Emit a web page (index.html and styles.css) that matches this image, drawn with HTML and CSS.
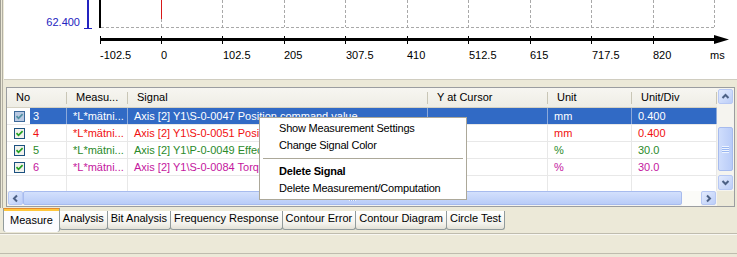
FILE: index.html
```html
<!DOCTYPE html>
<html lang="en">
<head>
    <meta charset="UTF-8">
    <title>Measure</title>
    <link rel="stylesheet" href="styles.css">
</head>
<body>
    <div class="workspace">
        <div class="pane">
            <!-- chart -->
            <div class="chart">
                <svg width="733" height="79" viewBox="4 0 733 79">
                    <g stroke="#a9a9a9" stroke-dasharray="3 2" fill="none">
                        <path d="M101 27.5H715"/>
                        <path d="M161.5 19V27M222.5 0V27M284.5 0V27M345.5 0V27M407.5 0V27M468.5 0V27M530.5 0V27M591.5 0V27M653.5 0V27M714.5 0V27"/>
                    </g>
                    <path d="M161.5 0V19" stroke="#d81818"/>
                    <text x="80" y="26" text-anchor="end" class="ylabel">62.400</text>
                    <path d="M88 0V28" stroke="#2323c0" stroke-width="2"/>
                    <path d="M84 28.5H92" stroke="#2323c0"/>
                    <path d="M100 0V28" stroke="#000" stroke-width="2"/>
                    <path d="M100 39.5H722" stroke="#000" stroke-width="3"/>
                    <polygon points="714,35 729,39.5 714,44" fill="#000"/>
                    <path d="M100.5 36V44M161.5 36V44M222.5 36V44M284.5 36V44M345.5 36V44M407.5 36V44M468.5 36V44M530.5 36V44M591.5 36V44M653.5 36V44" stroke="#000"/>
                    <g class="xlabel">
                        <text x="100" y="59">-102.5</text>
                        <text x="161" y="59">0</text>
                        <text x="223" y="59">102.5</text>
                        <text x="284" y="59">205</text>
                        <text x="346" y="59">307.5</text>
                        <text x="407" y="59">410</text>
                        <text x="469" y="59">512.5</text>
                        <text x="530" y="59">615</text>
                        <text x="592" y="59">717.5</text>
                        <text x="653" y="59">820</text>
                        <text x="710" y="59">ms</text>
                    </g>
                </svg>
            </div>

            <!-- signal list -->
            <div class="list">
                <div class="list-body">
                    <div class="grid">
                        <div class="head">
                            <div>No</div>
                            <div>Measu...</div>
                            <div>Signal</div>
                            <div>Y at Cursor</div>
                            <div>Unit</div>
                            <div>Unit/Div</div>
                        </div>
                        <div class="row sel">
                            <div class="no"><svg class="chk" viewBox="0 0 11 11"><rect x="0.5" y="0.5" width="10" height="10" fill="#b9c9e2" stroke="#3d6a9a"/><path d="M2.5 5.2L4.5 7.3L8.6 3.2" fill="none" stroke="#4f8fa0" stroke-width="1.7"/></svg><span>3</span></div>
                            <div>*L*mätni...</div>
                            <div>Axis [2] Y1\S-0-0047 Position command value</div>
                            <div></div>
                            <div>mm</div>
                            <div>0.400</div>
                        </div>
                        <div class="row red">
                            <div class="no"><svg class="chk" viewBox="0 0 11 11"><rect x="0.5" y="0.5" width="10" height="10" fill="#f1f1ec" stroke="#1c5180"/><path d="M2.5 5.2L4.5 7.3L8.6 3.2" fill="none" stroke="#21a121" stroke-width="1.7"/></svg><span>4</span></div>
                            <div>*L*mätni...</div>
                            <div>Axis [2] Y1\S-0-0051 Position feedback value</div>
                            <div></div>
                            <div>mm</div>
                            <div>0.400</div>
                        </div>
                        <div class="row green">
                            <div class="no"><svg class="chk" viewBox="0 0 11 11"><rect x="0.5" y="0.5" width="10" height="10" fill="#f1f1ec" stroke="#1c5180"/><path d="M2.5 5.2L4.5 7.3L8.6 3.2" fill="none" stroke="#21a121" stroke-width="1.7"/></svg><span>5</span></div>
                            <div>*L*mätni...</div>
                            <div>Axis [2] Y1\P-0-0049 Effective torque</div>
                            <div></div>
                            <div>%</div>
                            <div>30.0</div>
                        </div>
                        <div class="row magenta">
                            <div class="no"><svg class="chk" viewBox="0 0 11 11"><rect x="0.5" y="0.5" width="10" height="10" fill="#f1f1ec" stroke="#1c5180"/><path d="M2.5 5.2L4.5 7.3L8.6 3.2" fill="none" stroke="#21a121" stroke-width="1.7"/></svg><span>6</span></div>
                            <div>*L*mätni...</div>
                            <div>Axis [2] Y1\S-0-0084 Torque feedback value</div>
                            <div></div>
                            <div>%</div>
                            <div>30.0</div>
                        </div>
                        <div class="row">
                            <div></div><div></div><div></div><div></div><div></div><div></div>
                        </div>
                    </div>
                    <div class="vscroll">
                        <div class="sbtn"><svg viewBox="0 0 13 13"><path d="M3.5 8L6.5 5L9.5 8" fill="none" stroke="#4d6185" stroke-width="2"/></svg></div>
                        <div class="vthumb"><span class="grip-h"></span></div>
                        <div class="sbtn down"><svg viewBox="0 0 13 13"><path d="M3.5 5L6.5 8L9.5 5" fill="none" stroke="#4d6185" stroke-width="2"/></svg></div>
                    </div>
                </div>
                <div class="hscroll-row">
                    <div class="hscroll">
                        <div class="sbtn"><svg viewBox="0 0 13 13"><path d="M8 3.5L5 6.5L8 9.5" fill="none" stroke="#4d6185" stroke-width="2"/></svg></div>
                        <div class="hthumb"><span class="grip-v"></span></div>
                        <div class="track"></div>
                        <div class="sbtn"><svg viewBox="0 0 13 13"><path d="M5 3.5L8 6.5L5 9.5" fill="none" stroke="#4d6185" stroke-width="2"/></svg></div>
                    </div>
                    <div class="corner"></div>
                </div>
            </div>
        </div>
    </div>

    <!-- tabs -->
    <div class="tabs">
        <div class="tab active">Measure</div>
        <div class="tab">Analysis</div>
        <div class="tab">Bit Analysis</div>
        <div class="tab">Frequency Response</div>
        <div class="tab">Contour Error</div>
        <div class="tab">Contour Diagram</div>
        <div class="tab">Circle Test</div>
    </div>

    <div class="status"></div>

    <!-- context menu -->
    <div class="menu">
        <div class="menu-item">Show Measurement Settings</div>
        <div class="menu-item">Change Signal Color</div>
        <div class="menu-sep"></div>
        <div class="menu-item bold">Delete Signal</div>
        <div class="menu-item">Delete Measurement/Computation</div>
    </div>
</body>
</html>
```

FILE: styles.css
```css
* {
    box-sizing: border-box;
}

body {
    margin: 0;
    width: 737px;
    height: 257px;
    overflow: hidden;
    position: relative;
    background-color: #ECE9D8;
    font-family: "Liberation Sans", Arial, sans-serif;
    font-size: 11px;
    color: #000;
}

/* 外框 */
.workspace {
    height: 208px;
    border-left: 1px solid #A09E94;
    padding-left: 1px;
}

.pane {
    height: 100%;
    border-left: 1px solid #B3B0A3;
    padding-left: 1px;
}

/* 圖表 */
.chart {
    height: 80px;
    background-color: #fff;
    border-bottom: 1px solid #D0CDC0;
}

.chart svg {
    display: block;
}

.chart text {
    font-family: "Liberation Sans", Arial, sans-serif;
    font-size: 11px;
}

.ylabel {
    fill: #2323c0;
}

/* 訊號列表 */
.list {
    margin: 7px 2px 0 2px;
    height: 120px;
    border: 1px solid #9B9DA0;
}

.list-body {
    display: flex;
    height: 103px;
}

.grid {
    flex: 1;
    background-color: #fff;
    overflow: hidden;
}

.head, .row {
    display: grid;
    grid-template-columns: 60px 61px 300px 120px 84px 85px;
}

.head {
    height: 20px;
    background: linear-gradient(#F7F6F1, #EEEDE5);
    border-bottom: 1px solid #D5D2C3;
}

.head div {
    padding-left: 9px;
    line-height: 19px;
    white-space: nowrap;
    background: linear-gradient(#C9C6B6, #C9C6B6) no-repeat right 4px / 1px 12px;
}

.row {
    height: 17px;
    border-bottom: 1px solid #E8E8E8;
}

.row div {
    padding-left: 6px;
    line-height: 16px;
    white-space: nowrap;
    overflow: hidden;
    border-right: 1px solid #E8E8E8;
}

.row .no {
    display: flex;
    align-items: center;
    padding-left: 7px;
}

.chk {
    width: 11px;
    height: 11px;
    flex: none;
}

.no span {
    margin-left: 5px;
    padding-left: 3px;
}

.row.sel {
    background: linear-gradient(90deg, #fff 23px, #316AC5 23px);
    color: #fff;
}

.row.sel div {
    border-right-color: #8CA9DA;
}

.red {
    color: #F01010;
}

.green {
    color: #2A8A2A;
}

.magenta {
    color: #C4169E;
}

/* 捲軸 */
.vscroll {
    width: 17px;
    display: flex;
    flex-direction: column;
    padding: 1px;
    background-color: #F5F4EF;
}

.sbtn {
    width: 15px;
    height: 15px;
    flex: none;
    border: 1px solid #B7C8F4;
    border-radius: 2px;
    background: linear-gradient(135deg, #E3EBFD, #BCCEF8);
}

.sbtn svg {
    display: block;
    width: 13px;
    height: 13px;
}

.sbtn.down {
    margin-top: auto;
}

.vthumb {
    margin-top: 23px;
    height: 44px;
    border: 1px solid #A7BBEE;
    border-radius: 2px;
    background: linear-gradient(90deg, #CFDDFC, #B9CCF8);
    display: flex;
    align-items: center;
    justify-content: center;
}

.grip-h {
    width: 7px;
    height: 7px;
    background: repeating-linear-gradient(#EEF4FE 0 1px, #9AB7F2 1px 2px);
}

.hscroll-row {
    display: flex;
    height: 15px;
}

.hscroll {
    flex: 1;
    display: flex;
    padding: 0 1px;
    background-color: #F5F4EF;
}

.hscroll .sbtn {
    height: 14px;
}

.hthumb {
    width: 659px;
    height: 14px;
    border: 1px solid #A7BBEE;
    border-radius: 2px;
    background: linear-gradient(#D3E0FC, #B9CCF8);
    display: flex;
    align-items: center;
    justify-content: center;
}

.grip-v {
    width: 7px;
    height: 6px;
    background: repeating-linear-gradient(90deg, #EEF4FE 0 1px, #9AB7F2 1px 2px);
}

.track {
    flex: 1;
    background-color: #FBFBF8;
}

.corner {
    width: 17px;
    background-color: #ECE9D8;
}

/* 分頁 */
.tabs {
    display: flex;
    align-items: flex-start;
    height: 25px;
    padding-left: 3px;
}

.tab {
    margin-top: 3px;
    height: 19px;
    padding: 0 3px;
    line-height: 15px;
    white-space: nowrap;
    border: 1px solid #919B9C;
    border-top: none;
    border-radius: 0 0 3px 3px;
    background: linear-gradient(#FFFFFF, #F3F2EC 70%, #E3E1D7);
}

.tab + .tab {
    margin-left: -1px;
}

.tab.active {
    margin-top: 0;
    height: 24px;
    padding: 0 6px;
    line-height: 22px;
    border-top: 1px solid #E68B2C;
    border-bottom: none;
    box-shadow: inset 0 2px #FFC73C;
    background: #FCFCFE;
    position: relative;
    z-index: 1;
}

.status {
    height: 21px;
    border-top: 1px solid #BFBCAE;
    border-bottom: 1px solid #BFBCAE;
    box-shadow: inset 0 1px #F8F7F2;
}

/* 右鍵選單 */
.menu {
    position: absolute;
    left: 259px;
    top: 117px;
    width: 208px;
    padding: 2px 0;
    background-color: #fff;
    border: 1px solid #ACA899;
    letter-spacing: -0.2px;
}

.menu-item {
    height: 17px;
    line-height: 17px;
    padding-left: 19px;
    white-space: nowrap;
}

.menu-item.bold {
    font-weight: bold;
}

.menu-sep {
    height: 1px;
    margin: 4px 3px;
    background-color: #ACA899;
}
```
